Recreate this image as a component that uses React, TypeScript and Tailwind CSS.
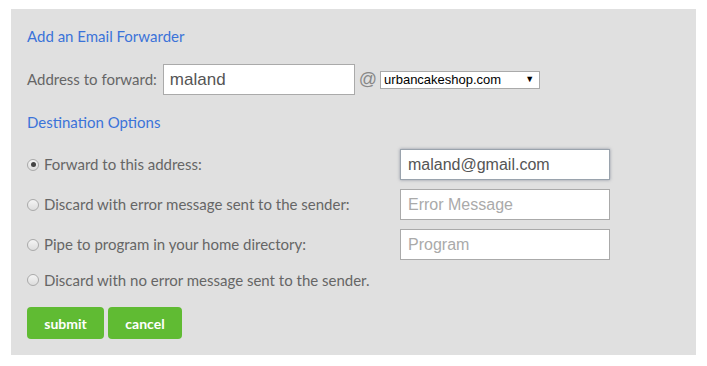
import React, { useState } from "react";

const options = [
  { id: "fwd", label: "Forward to this address:", value: "maland@gmail.com", placeholder: "" },
  { id: "fail", label: "Discard with error message sent to the sender:", value: "", placeholder: "Error Message" },
  { id: "pipe", label: "Pipe to program in your home directory:", value: "", placeholder: "Program" },
  { id: "blackhole", label: "Discard with no error message sent to the sender.", value: null, placeholder: "" },
];

export default function App() {
  const [choice, setChoice] = useState("fwd");

  return (
    <div className="w-[707px] h-[366px] bg-white pt-[9px] pl-[11px] font-['Lato','Open_Sans',sans-serif] text-[#666]">
      <div className="w-[685px] h-[346px] bg-[#e0e0e0] px-4 pt-[17px]">
        <h2 className="text-[15px] leading-[20px] text-[#3b73d9]">Add an Email Forwarder</h2>

        {/* address row */}
        <div className="mt-[18px] flex items-center h-[31px]">
          <span className="text-[15px]">Address to forward:</span>
          <input
            defaultValue="maland"
            className="ml-[6px] w-[192px] h-[31px] border border-[#aaa] bg-white px-[6px] text-[17px] text-[#555] font-['Liberation_Sans',Arial,sans-serif] outline-none"
          />
          <span className="ml-[4px] text-[18px] text-[#888] font-['Liberation_Sans',Arial,sans-serif]">@</span>
          <div className="ml-[3px] w-[160px] h-[18px] border border-[#aaa] bg-white flex items-center justify-between pl-[3px] pr-[5px] text-[13px] text-black font-['Liberation_Sans',Arial,sans-serif]">
            <span>urbancakeshop.com</span>
            <span className="text-[9px]">▼</span>
          </div>
        </div>

        <h2 className="mt-[17px] text-[15px] leading-[20px] text-[#3b73d9]">Destination Options</h2>

        <div className="mt-[17px] flex flex-col gap-[9px]">
          {options.map((o) => (
            <label key={o.id} className={"flex items-center cursor-pointer " + (o.value !== null ? "h-[31px]" : "h-[22px]")}>
              <span
                onClick={() => setChoice(o.id)}
                className="w-[12px] h-[12px] rounded-full border border-[#aaa] bg-gradient-to-b from-[#f4f4f4] to-[#ddd] flex items-center justify-center"
              >
                {choice === o.id && <span className="w-[5px] h-[5px] rounded-full bg-[#444]" />}
              </span>
              <span className="ml-[5px] w-[356px] text-[15px] whitespace-nowrap">{o.label}</span>
              {o.value !== null && (
                <input
                  defaultValue={o.value}
                  placeholder={o.placeholder}
                  className={
                    "w-[210px] h-[31px] bg-white px-[7px] text-[16px] text-[#555] placeholder:text-[#aaa] font-['Liberation_Sans',Arial,sans-serif] outline-none " +
                    (o.id === "fwd"
                      ? "border border-[#9aa3ad] shadow-[0_0_3px_rgba(90,100,120,0.6)]"
                      : "border border-[#aaa]")
                  }
                />
              )}
            </label>
          ))}
        </div>

        <div className="mt-[16px] flex gap-[4px]">
          <button className="w-[77px] h-[32px] rounded-[4px] bg-[#60bb33] text-white text-[14px] font-bold">submit</button>
          <button className="w-[74px] h-[32px] rounded-[4px] bg-[#60bb33] text-white text-[14px] font-bold">cancel</button>
        </div>
      </div>
    </div>
  );
}
